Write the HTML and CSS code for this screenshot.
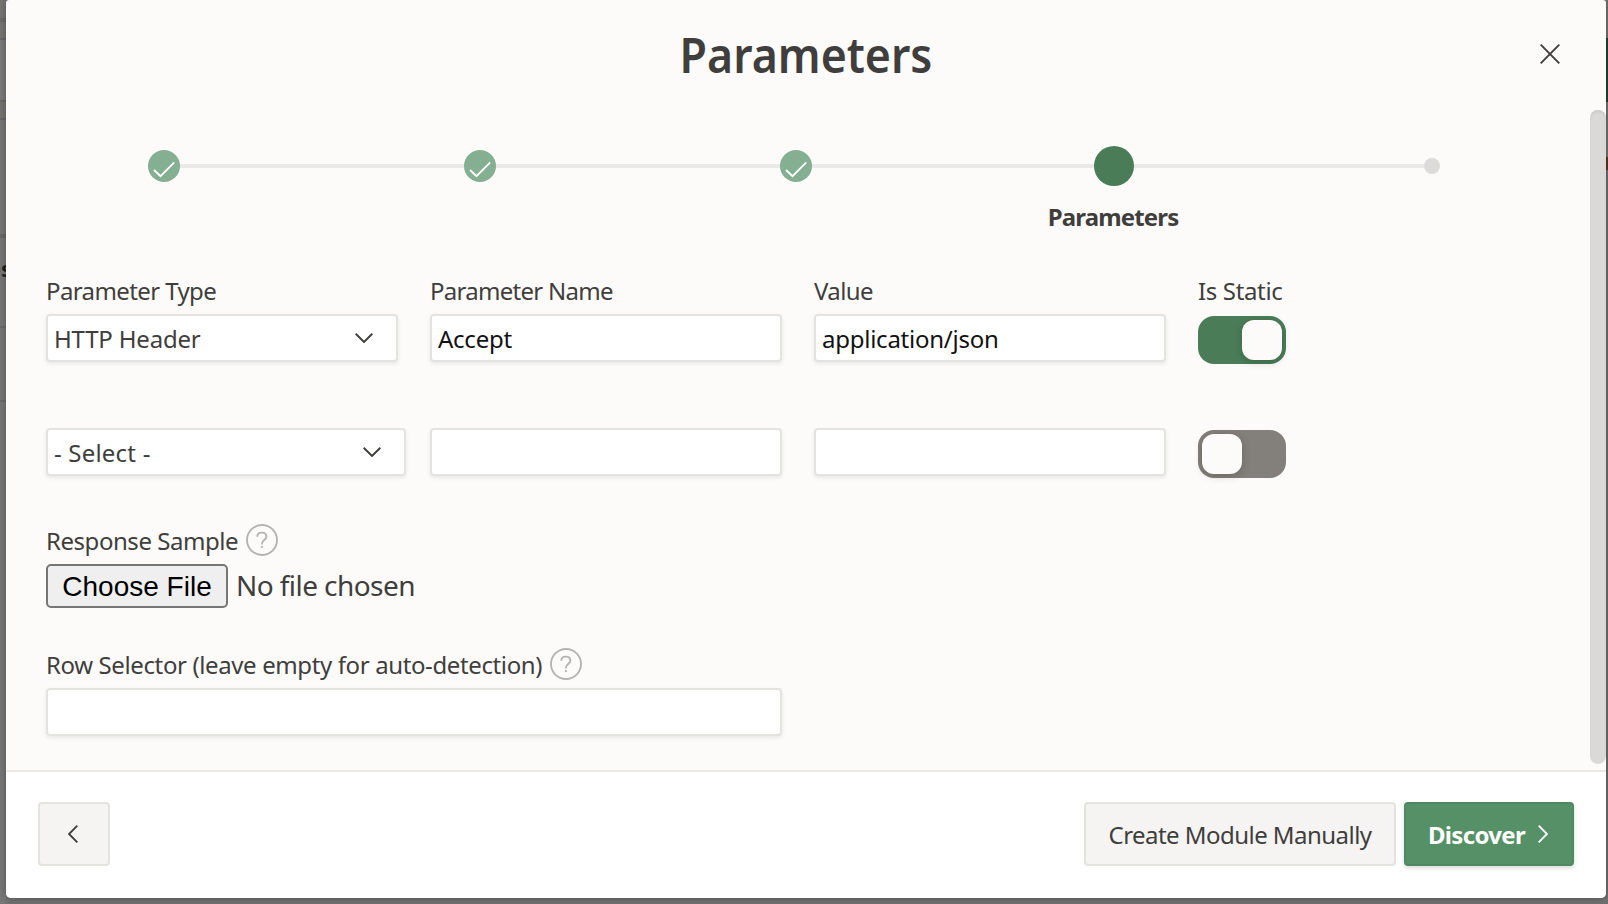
FILE: index.html
```html
<!DOCTYPE html>
<html lang="en">
<head>
<meta charset="utf-8">
<title>Parameters</title>
<link rel="stylesheet" href="styles.css">
</head>
<body>
<div class="page">
  <div class="page-left"><span class="page-left-text">es</span></div>
  <section class="dialog">
    <header class="dialog-header">
      <h1 class="dialog-title">Parameters</h1>
      <button class="close" aria-label="Close"><svg width="20" height="20" viewBox="0 0 20 20"><path d="M.7.7l18.6 18.6M19.3.7L.7 19.3"/></svg></button>
    </header>
    <div class="dialog-body">
      <div class="content">
        <div class="steps">
          <span class="dot done"><svg width="32" height="32" viewBox="0 0 32 32"><path d="M6 20l6.500 6.200L26.300 12.300"/></svg></span>
          <span class="line"></span>
          <span class="dot done"><svg width="32" height="32" viewBox="0 0 32 32"><path d="M6 20l6.500 6.200L26.300 12.300"/></svg></span>
          <span class="line"></span>
          <span class="dot done"><svg width="32" height="32" viewBox="0 0 32 32"><path d="M6 20l6.500 6.200L26.300 12.300"/></svg></span>
          <span class="line line-third"></span>
          <span class="dot current"></span>
          <span class="line line-last"></span>
          <span class="dot todo"></span>
        </div>
        <div class="step-label">Parameters</div>

        <div class="grid first">
          <div><label class="label tight">Parameter Type</label>
            <div class="field select"><span class="header">HTTP Header</span><svg width="18" height="10" viewBox="0 0 18 10"><path d="M.7.8L9 9L17.300.8"/></svg></div></div>
          <div><label class="label tighter">Parameter Name</label><input class="field" value="Accept"></div>
          <div><label class="label tight">Value</label><input class="field" value="application/json"></div>
          <div><label class="label normal">Is Static</label><div class="toggle on"><span class="knob"></span></div></div>
        </div>
        <div class="grid second">
          <div><div class="field select wide"><span>- Select -</span><svg width="18" height="10" viewBox="0 0 18 10"><path d="M.7.8L9 9L17.300.8"/></svg></div></div>
          <div><input class="field"></div>
          <div><input class="field"></div>
          <div><div class="toggle"><span class="knob"></span></div></div>
        </div>

        <div class="label-row sample">
          <label class="label response">Response Sample</label>
          <svg class="help" width="32" height="32" viewBox="0 0 32 32"><circle cx="16" cy="16" r="15"/><path d="M11.300 12.700c0-2.600 1.900-4.100 4.500-4.100 2.700 0 4.600 1.500 4.600 4 0 3.500-4.500 3.500-4.500 7.200v.6M15.900 22v2"/></svg>
        </div>
        <div class="file"><button class="file-button">Choose File</button><span class="file-name">No file chosen</span></div>
        <div class="label-row selector">
          <label class="label row-label">Row Selector (leave empty for auto-detection)</label>
          <svg class="help" width="32" height="32" viewBox="0 0 32 32"><circle cx="16" cy="16" r="15"/><path d="M11.300 12.700c0-2.600 1.900-4.100 4.500-4.100 2.700 0 4.600 1.500 4.600 4 0 3.500-4.500 3.500-4.500 7.200v.6M15.900 22v2"/></svg>
        </div>
        <input class="field full">
      </div>
      <div class="scrollbar"></div>
    </div>
    <footer class="dialog-footer">
      <button class="btn back" aria-label="Back"><svg width="10" height="18" viewBox="0 0 10 18"><path d="M9.300.7L1 9l8.300 8.300"/></svg></button>
      <div class="actions">
        <button class="btn manual">Create Module Manually</button>
        <button class="btn primary"><span>Discover</span><svg width="10" height="18" viewBox="0 0 10 18"><path d="M.7.7L9 9L.7 17.300"/></svg></button>
      </div>
    </footer>
  </section>
  <div class="page-right"></div>
</div>
</body>
</html>
```

FILE: styles.css
```css
* { box-sizing: border-box; }
body {
  margin: 0;
  overflow: hidden;
  font: 24px/32px "Noto Sans", "Open Sans", sans-serif;
  color: #403e3c;
}
button, input { font: inherit; color: inherit; margin: 0; }
svg { display: block; flex: none; fill: none; stroke: #403e3c; stroke-width: 1.9; }
.page {
  width: 1608px;
  height: 904px;
  display: flex;
  overflow: hidden;
  background: #717171;
}
.page-left {
  width: 6px;
  height: 904px;
  overflow: hidden;
  display: flex;
  justify-content: flex-end;
  padding-top: 255px;
  background: linear-gradient(#777571 18px, #6c6b69 18px 22px, #777571 22px 38px, #696969 38px 40px,
    #7b7b7b 40px 100px, #6a6a6a 100px 102px, #757470 102px 118px, #696969 118px 120px,
    #777 120px 234px, #696969 234px 238px, #777 238px 326px, #6b6b6b 326px 328px,
    #777 328px 400px, #6b6b6b 400px 402px, #777 402px);
}
.page-left-text { font-size: 22px; font-weight: 700; line-height: 27px; color: #201f1f; margin-right: -6px; }
.page-right {
  width: 2px;
  background: linear-gradient(#737373 38px, #1f452f 38px 102px, #737373 102px 157px,
    #5f3420 157px 170px, #6f6f6f 170px);
}
.dialog {
  width: 1600px;
  height: 898px;
  display: flex;
  flex-direction: column;
  position: relative;
  background: #fcfbfa;
  border-radius: 3px 3px 5px 5px;
  overflow: hidden;
  box-shadow: 0 0 8px rgba(0, 0, 0, .3);
}
.dialog-header {
  height: 110px;
  flex: none;
  display: grid;
  grid-template-columns: 60px 1fr 60px;
  padding: 0 32px;
  align-items: start;
}
.dialog-title {
  grid-column: 2;
  margin: 24px 0 0;
  font-size: 49px;
  line-height: 60px;
  font-weight: 650;
  text-align: center;
  transform: scaleX(.911);
}
.close {
  border: 0;
  background: none;
  padding: 10px;
  width: 40px;
  margin: 34px 0 0 16px;
  align-self: start;
}
.dialog-body { height: 660px; flex: none; display: flex; }
.content { width: 1584px; padding: 0 40px; }
.steps { height: 40px; margin-top: 36px; padding-left: 102px; display: flex; align-items: center; }
.dot { border-radius: 50%; flex: none; }
.done { width: 32px; height: 32px; background: #84af91; }
.done svg { stroke: #fff; stroke-width: 1.8; }
.current { width: 40px; height: 40px; background: #4a7d57; }
.todo { width: 16px; height: 16px; background: #dcdbd8; }
.line { width: 284px; height: 4px; flex: none; background: #eae9e7; }
.line-third { width: 282px; }
.line-last { width: 290px; }
.step-label {
  margin: 15px 0 0 967px;
  width: 200px;
  text-align: center;
  font-weight: 700;
  letter-spacing: -.85px;
}
.grid { display: grid; grid-template-columns: 352px 352px 352px 88px; column-gap: 32px; }
.first { margin-top: 42px; }
.second { margin-top: 64px; }
.label { display: block; height: 32px; white-space: nowrap; letter-spacing: -.45px; }
.grid .label { margin: 0 0 7px; }
.tight { letter-spacing: -.6px; }
.grid .tighter { letter-spacing: -.72px; }
.grid .normal { letter-spacing: -.35px; }
.field {
  display: block;
  width: 352px;
  height: 48px;
  padding: 0 6px;
  border: 2px solid #e4e3e0;
  border-radius: 4px;
  background: #fff;
  box-shadow: 0 2px 4px rgba(0, 0, 0, .08);
  color: #111;
  letter-spacing: -.25px;
}
.select { display: flex; align-items: center; justify-content: space-between; padding: 2px 23px 0 6px; color: #403e3c; letter-spacing: .2px; }
.select .header { letter-spacing: -.2px; }
.select svg { margin-top: -3px; }
.wide { width: 360px; }
.toggle {
  width: 88px;
  height: 48px;
  margin-top: 9px;
  padding: 4px;
  display: flex;
  border-radius: 16px;
  background: #837f7b;
}
.second .toggle { margin-top: 2px; }
.toggle.on { justify-content: flex-end; background: #4a7d57; }
.knob { width: 40px; height: 40px; border-radius: 12px; background: #fcfbfa; box-shadow: 0 2px 8px rgba(0, 0, 0, .18); }
.label-row { height: 34px; display: flex; gap: 8px; }
.label-row .label { padding-top: 1px; }
.help { stroke: #b5b4b2; }
.sample { margin-top: 46px; }
.file { display: flex; align-items: center; height: 44px; margin-top: 6px; }
.file-button {
  width: 182px;
  height: 44px;
  padding: 2px 0 0;
  border: 2px solid #767676;
  border-radius: 5px;
  background: #efefef;
  color: #000;
  font: 28px/36px "Liberation Sans", Arial, sans-serif;
}
.file-name { margin-left: 8px; font-size: 28px; letter-spacing: -.57px; white-space: nowrap; padding-bottom: 3px; }
.selector { margin-top: 40px; }
.row-label { letter-spacing: -.38px; }
.full { width: 736px; margin-top: 6px; }
.scrollbar { width: 16px; height: 654px; border-radius: 8px; background: #dad9d7; box-shadow: inset 0 3px 3px -1px #cccbc9; }
.dialog-footer {
  height: 128px;
  flex: none;
  display: flex;
  justify-content: space-between;
  padding: 30px 32px;
  border-top: 2px solid #eae9e8;
  background: #fff;
}
.actions { display: flex; gap: 8px; }
.btn {
  height: 64px;
  padding: 2px 0 0;
  border: 2px solid #e4e3e0;
  border-radius: 4px;
  background: #f5f4f2;
  display: flex;
  align-items: center;
  justify-content: center;
  letter-spacing: -.54px;
  white-space: nowrap;
}
.btn svg { margin-top: -2px; }
.back { width: 72px; }
.back svg { margin-right: 2px; }
.manual { width: 312px; }
.primary {
  width: 170px;
  padding-right: 2px;
  gap: 13px;
  border-color: #50895f;
  background: #569066;
  color: #fff;
  font-weight: 700;
  letter-spacing: -.68px;
  box-shadow: 0 2px 4px rgba(0, 0, 0, .15);
}
.primary svg { stroke: #fff; }
```
